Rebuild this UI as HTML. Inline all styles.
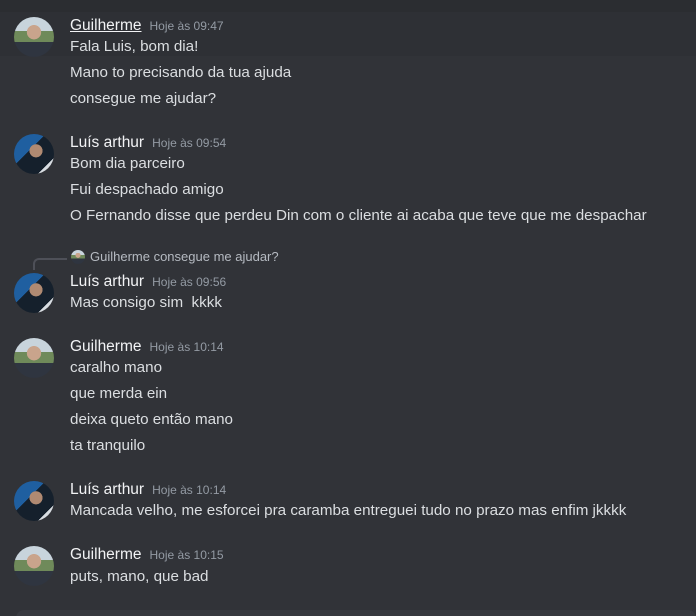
<!DOCTYPE html><html><head><style>
html,body{margin:0;width:696px;height:616px;overflow:hidden}
body{background:#313338;font-family:"Liberation Sans",sans-serif;position:relative}
.w{position:absolute;left:0;top:1px;width:696px;height:616px}
.t{position:absolute;left:70px;height:20px;line-height:20px;font-size:15.2px;color:#dbdee1;white-space:nowrap}
.n{position:absolute;left:70px;height:20px;line-height:20px;font-size:15.5px;color:#f2f3f5;white-space:nowrap}
.n span{font-size:12px;color:#949ba4;margin-left:8px}
.a{position:absolute;left:14px;width:40px;height:40px;border-radius:50%;overflow:hidden}
.g{background:radial-gradient(circle at 50% 38%,#c9a48c 0 22%,transparent 23%),linear-gradient(#c8d4dc 0 35%,#6f8a5a 35% 62%,#2f3540 62%)}
.l{background:radial-gradient(circle at 55% 42%,#b08a72 0 20%,transparent 21%),linear-gradient(135deg,#1f5fa0 0 40%,#15202c 40% 80%,#d8dde2 80%)}
</style></head><body>
<div style="position:absolute;left:0;top:0;width:696px;height:12px;background:#2b2d31"></div>
<div style="position:absolute;left:0;top:12px;width:696px;height:44px;background:#2e3035"></div>
<div class="w">
<div class="a g" style="top:16px"></div>
<div class="n" style="top:15px"><u>Guilherme</u><span>Hoje às 09:47</span></div>
<div class="t" style="top:36px">Fala Luis, bom dia!</div>
<div class="t" style="top:62px">Mano to precisando da tua ajuda</div>
<div class="t" style="top:88px">consegue me ajudar?</div>
<div class="a l" style="top:133px"></div>
<div class="n" style="top:132px">Luís arthur<span>Hoje às 09:54</span></div>
<div class="t" style="top:153px">Bom dia parceiro</div>
<div class="t" style="top:179px">Fui despachado amigo</div>
<div class="t" style="top:205px">O Fernando disse que perdeu Din com o cliente ai acaba que teve que me despachar</div>
<div style="position:absolute;left:33px;top:257px;width:32px;height:10px;border-left:2px solid #4e5058;border-top:2px solid #4e5058;border-top-left-radius:6px"></div>
<div class="a g" style="left:71px;top:249px;width:14px;height:14px"></div>
<div style="position:absolute;left:90px;top:248px;font-size:13px;line-height:16px;color:#b5bac1">Guilherme consegue me ajudar?</div>
<div class="a l" style="top:272px"></div>
<div class="n" style="top:271px">Luís arthur<span>Hoje às 09:56</span></div>
<div class="t" style="top:292px">Mas consigo sim&nbsp; kkkk</div>
<div class="a g" style="top:337px"></div>
<div class="n" style="top:336px">Guilherme<span>Hoje às 10:14</span></div>
<div class="t" style="top:357px">caralho mano</div>
<div class="t" style="top:383px">que merda ein</div>
<div class="t" style="top:409px">deixa queto então mano</div>
<div class="t" style="top:435px">ta tranquilo</div>
<div class="a l" style="top:480px"></div>
<div class="n" style="top:479px">Luís arthur<span>Hoje às 10:14</span></div>
<div class="t" style="top:500px">Mancada velho, me esforcei pra caramba entreguei tudo no prazo mas enfim jkkkk</div>
<div class="a g" style="top:545px"></div>
<div class="n" style="top:544px">Guilherme<span>Hoje às 10:15</span></div>
<div class="t" style="top:566px">puts, mano, que bad</div>
</div>
<div style="position:absolute;left:16px;top:610px;width:680px;height:20px;background:#383a40;border-radius:8px"></div>
</body></html>
